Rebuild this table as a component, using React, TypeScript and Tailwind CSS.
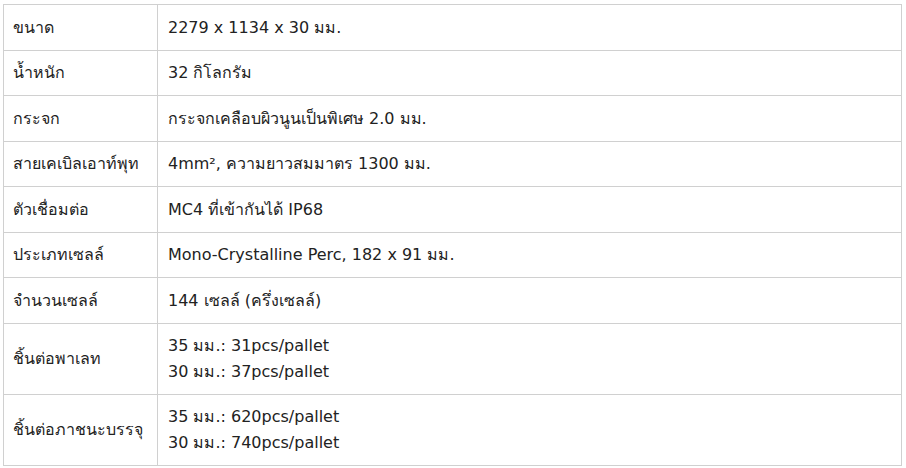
import React from "react";

const rows: [string, string[]][] = [
  ["ขนาด", ["2279 x 1134 x 30 มม."]],
  ["น้ำหนัก", ["32 กิโลกรัม"]],
  ["กระจก", ["กระจกเคลือบผิวนูนเป็นพิเศษ 2.0 มม."]],
  ["สายเคเบิลเอาท์พุท", ["4mm², ความยาวสมมาตร 1300 มม."]],
  ["ตัวเชื่อมต่อ", ["MC4 ที่เข้ากันได้ IP68"]],
  ["ประเภทเซลล์", ["Mono-Crystalline Perc, 182 x 91 มม."]],
  ["จำนวนเซลล์", ["144 เซลล์ (ครึ่งเซลล์)"]],
  ["ชิ้นต่อพาเลท", ["35 มม.: 31pcs/pallet", "30 มม.: 37pcs/pallet"]],
  ["ชิ้นต่อภาชนะบรรจุ", ["35 มม.: 620pcs/pallet", "30 มม.: 740pcs/pallet"]],
];

export default function App() {
  return (
    <div
      className="w-[906px] h-[468px] bg-white pl-[3px] pt-[4px]"
      style={{ fontFamily: '"DejaVu Sans", Tahoma, Verdana, sans-serif' }}
    >
      <table className="w-[899px] border-collapse text-[16px] text-[#222222]">
        <tbody>
          {rows.map(([k, v]) => (
            <tr key={k}>
              <td className="w-[154px] border border-[#d0d0d0] px-[9px] py-[9.5px] leading-[25.5px] align-middle">
                {k}
              </td>
              <td className="border border-[#d0d0d0] px-[10px] py-[9.5px] leading-[25.5px] align-middle">
                {v.map((line, i) => (
                  <div key={i}>{line}</div>
                ))}
              </td>
            </tr>
          ))}
        </tbody>
      </table>
    </div>
  );
}
